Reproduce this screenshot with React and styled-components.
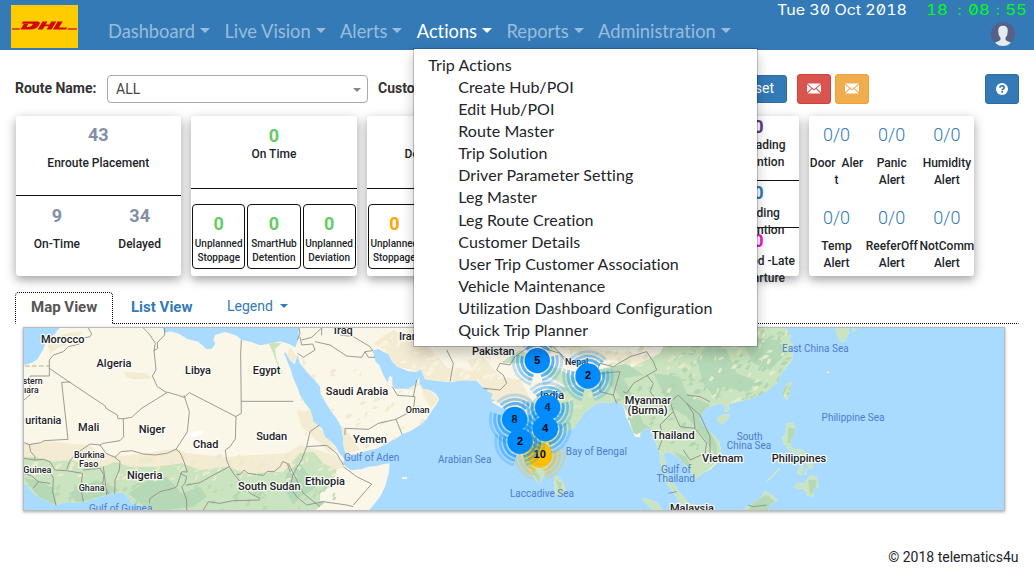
import React from "react";
import styled, { createGlobalStyle, css } from "styled-components";

const GlobalStyle = createGlobalStyle`
  * { box-sizing: border-box; }
  body { margin: 0; background: #fff; font-family: Roboto, sans-serif; color: #212529; overflow: hidden; }
`;

const Page = styled.div`
  width: 1034px;
  height: 576px;
  display: flex;
  flex-direction: column;
`;

/* ---------- header ---------- */
const Header = styled.header`
  height: 50px;
  flex: none;
  background: #337ab7;
  display: flex;
  padding-left: 11px;
`;
const Logo = styled.div`
  width: 67px;
  height: 43px;
  margin-top: 5px;
  background: #ffcc00;
`;
const Nav = styled.nav`
  display: flex;
  flex: 1;
  gap: 14.4px;
  margin-left: 30px;
  padding-top: 18px;
`;
const NavItem = styled.div`
  position: relative;
  display: flex;
  height: 27px;
  font: 18.27px/27px Lato, sans-serif;
  font-variant-ligatures: none;
  white-space: nowrap;
  color: ${(p) => (p.$active ? "#fff" : "rgba(255,255,255,.5)")};
`;
const Caret = styled.span`
  margin: ${(p) => p.$margin || "10px 0 0 5px"};
  width: 0;
  height: 0;
  border: solid transparent;
  border-width: ${(p) => p.$size || 5}px ${(p) => p.$size || 5}px 0;
  border-top-color: ${(p) => p.$color || "currentColor"};
`;
const Menu = styled.div`
  position: absolute;
  z-index: 10;
  top: 30px;
  left: -4px;
  width: 345px;
  height: 299px;
  padding: 5px 0 0 14.500px;
  background: #fff;
  border: 1px solid rgba(0, 0, 0, 0.2);
  background-clip: padding-box;
  box-shadow: 0 6px 12px rgba(0, 0, 0, 0.22);
  color: #212529;
  font: 16px/22.08px Lato, sans-serif;
  letter-spacing: 0.06px;
  font-variant-ligatures: none;
`;
const MenuTitle = styled.div``;
const MenuLink = styled.div`
  padding-left: 30px;
`;
const HeaderSide = styled.div`
  width: 257px;
  display: flex;
  flex-direction: column;
`;
const Clock = styled.div`
  display: flex;
  height: 20px;
  font: 14px/20px Inter, sans-serif;
  font-feature-settings: "zero", "tnum";
  color: #fff;
  white-space: pre;
`;
const DateText = styled.span`
  width: 149px;
  transform: scaleX(1.145);
  transform-origin: left;
`;
const TimeText = styled.span`
  display: flex;
  width: 102px;
  color: #00ff18;
  transform: scaleX(1.2);
  transform-origin: left;
`;
const TimePart = styled.span`
  width: ${(p) => p.$w}px;
`;
const Avatar = styled.svg`
  width: 24px;
  height: 24px;
  margin: 2px 0 0 214px;
`;

/* ---------- filter row ---------- */
const Filters = styled.div`
  display: flex;
  align-items: center;
  height: 29px;
  margin: 24px 15px 0;
  flex: none;
  font-size: 14px;
`;
const FieldLabel = styled.label`
  width: ${(p) => p.$w}px;
  padding-bottom: 2px;
  font-weight: 700;
  color: #333;
  white-space: nowrap;
`;
const Select = styled.div`
  width: 261px;
  height: 28px;
  display: flex;
  justify-content: space-between;
  margin-right: 10px;
  padding: 0 6px 0 8px;
  border: 1px solid #aaa;
  border-radius: 4px;
  color: #444;
  line-height: 27px;
`;
const Button = styled.button`
  width: ${(p) => p.$w || 34}px;
  height: ${(p) => p.$h || 30}px;
  display: flex;
  align-items: center;
  justify-content: ${(p) => (p.$end ? "flex-end" : "center")};
  padding: ${(p) => (p.$end ? "0 12px 2px 0" : 0)};
  margin: 0 0 0 ${(p) => p.$ml || 0}px;
  background: ${(p) => p.$bg};
  border: 1px solid ${(p) => p.$edge};
  border-radius: 3px;
  color: #fff;
  font: 14px Roboto, sans-serif;
`;

/* ---------- cards ---------- */
const Cards = styled.section`
  display: flex;
  gap: 10px;
  height: 160px;
  flex: none;
  margin: 13px 0 0 15.5px;
`;
const Card = styled.div`
  width: ${(p) => p.$w || 165.6}px;
  height: 159.500px;
  background: #fff;
  border-radius: 3px;
  box-shadow: 0 4px 8px rgba(0, 0, 0, 0.24), 0 3px 14px rgba(0, 0, 0, 0.16);
  display: flex;
  flex-direction: column;
  text-align: center;
`;
const Value = styled.div`
  font-size: 18px;
  line-height: 20px;
  font-weight: ${(p) => p.$weight || 700};
  color: ${(p) => p.$color || "#8090a6"};
`;
const Caption = styled.div`
  font-size: ${(p) => (p.$small ? 10 : 12)}px;
  line-height: ${(p) => (p.$small ? 14 : 17)}px;
  font-weight: 500;
  white-space: pre;
`;
const Block = styled.div`
  height: ${(p) => p.$h}px;
  flex: none;
  padding-top: ${(p) => p.$top}px;
  ${(p) => p.$line && css`border-bottom: 1px solid #111;`}
  ${Caption} { margin-top: ${(p) => p.$gap || 0}px; }
`;
const Columns = styled.div`
  display: grid;
  grid-template-columns: repeat(${(p) => p.$n}, 1fr);
`;
const Tiles = styled.div`
  display: flex;
  gap: 2px;
  margin: 15px 1px 0;
`;
const Tile = styled.div`
  flex: 1;
  min-width: 0;
  height: 65px;
  padding-top: 9px;
  border: 1px solid #111;
  border-radius: 4px;
  display: flex;
  flex-direction: column;
  align-items: center;
  ${Caption} { margin-top: 3px; }
`;

/* ---------- tabs and map ---------- */
const Tabs = styled.div`
  display: flex;
  height: 32px;
  flex: none;
  margin: 16px 15px 0;
  font-size: 15px;
  line-height: 29px;
`;
const Tab = styled.div`
  width: ${(p) => p.$w}px;
  padding-left: ${(p) => p.$pad}px;
  display: flex;
  white-space: nowrap;
  font-weight: ${(p) => (p.$light ? 400 : 700)};
  font-size: ${(p) => (p.$light ? 14 : 15)}px;
  line-height: ${(p) => (p.$light ? 27 : 29)}px;
  color: ${(p) => (p.$active ? "#555" : "#337ab7")};
  border: 1px dotted transparent;
  border-bottom-color: ${(p) => (p.$active ? "transparent" : "#000")};
  ${(p) => p.$active && css`
    border-color: #000 #000 transparent;
    border-radius: 4px 4px 0 0;
  `}
  ${(p) => p.$fill && css`flex: 1;`}
`;
const MapFrame = styled.div`
  width: 982px;
  height: 184px;
  flex: none;
  margin: 3px 0 0 23px;
  border: 1px solid #bbb;
  box-shadow: 0 1px 3px rgba(0, 0, 0, 0.35);
`;
const MapSvg = styled.svg`
  display: block;
  width: 980px;
  height: 182px;
`;
const Footer = styled.footer`
  margin: 36px 15.5px 0 0;
  text-align: right;
  font-size: 14px;
  line-height: 20px;
`;

const MENU = [
  "Create Hub/POI", "Edit Hub/POI", "Route Master", "Trip Solution",
  "Driver Parameter Setting", "Leg Master", "Leg Route Creation",
  "Customer Details", "User Trip Customer Association", "Vehicle Maintenance",
  "Utilization Dashboard Configuration", "Quick Trip Planner",
];
const NAV = ["Dashboard", "Live Vision", "Alerts", "Actions", "Reports", "Administration"];

const LAND = [
  "M178,24 162,44 140,58 130,88 112,118 96,128 72,135 V488 L88,506 102,522 130,538 150,548 168,556 185,550 205,545 225,549 250,545 270,541 290,534 325,523 350,519 372,518 385,534 396,550 420,558 442,558 446,575 H1103 L1120,556 1142,528 1156,498 1166,462 1169,430 1150,432 1130,438 1105,440 1085,447 1055,451 1040,442 1028,432 1033,416 1020,402 1006,378 990,362 975,350 966,325 940,305 932,270 915,250 900,225 893,204 880,175 872,148 852,100 856,97 872,124 884,133 893,104 899,129 920,155 942,178 960,200 962,222 975,245 992,272 1010,296 1024,322 1029,350 1031,380 1038,405 1075,402 1100,392 1130,386 1160,370 1190,355 1206,343 1230,334 1262,314 1280,298 1290,280 1310,252 1318,238 1306,220 1290,210 1268,206 1258,190 1259,170 1244,196 1225,206 1185,206 1177,194 1177,172 1168,167 1163,188 1150,165 1138,135 1127,125 1118,92 1135,86 1150,96 1165,102 1175,122 1192,140 1225,154 1250,156 1262,148 1270,166 1275,178 1305,182 1350,187 1390,181 1430,182 1446,200 1465,206 1462,213 1480,222 1472,236 1486,240 1475,246 1500,262 1520,268 1530,262 1534,290 1538,320 1546,356 1556,390 1575,425 1595,458 1608,482 1619,490 1632,466 1638,450 1643,426 1652,388 1675,360 1700,335 1725,320 1738,300 1755,275 1780,258 1800,246 1820,250 1838,246 1862,248 1872,265 1878,292 1890,316 1905,350 1920,352 1925,334 1943,320 1956,340 1968,370 1978,398 1982,430 1990,462 2000,490 2022,520 2040,548 2056,575 H2110 L2095,560 2063,548 2052,530 2036,516 2022,492 2003,480 1998,450 1996,425 1990,400 2002,396 2025,405 2040,416 2052,432 2072,452 2084,480 2100,464 2132,448 2155,425 2164,398 2158,366 2138,342 2118,324 2104,308 2100,292 2114,268 2140,256 2168,250 2175,262 2174,277 2186,272 2186,253 2210,246 2245,238 2280,226 2302,212 2330,190 2345,160 2362,138 2376,122 2378,98 2366,92 2379,76 2365,62 2374,50 2356,24 H896 L896,54 886,82 868,72 840,64 815,70 780,76 755,66 725,60 708,46 675,36 645,45 640,60 646,72 635,86 620,88 595,65 562,57 538,42 512,34 494,38 488,24Z",
  "M1665,465 1678,472 1693,495 1697,512 1680,527 1668,522 1662,500Z",
  "M2152,294 2168,284 2190,282 2183,298 2168,313 2154,306Z",
  "M2375,186 2370,215 2360,243 2350,226 2348,212 2362,190Z",
  "M2358,312 2372,308 2382,312 2386,338 2374,360 2370,376 2384,390 2404,388 2424,406 2414,408 2388,400 2366,390 2354,374 2346,352 2357,345Z",
  "M2416,426 2436,420 2440,440 2428,448ZM2398,440 2412,438 2404,466 2390,462ZM2415,450 2422,445 2420,462 2412,466ZM2382,418 2396,424 2388,434Z",
  "M2382,500 2394,488 2412,492 2430,466 2450,472 2456,502 2440,508 2440,530 2420,525 2410,504 2394,508Z",
  "M2336,444 2340,448 2310,478 2298,484 2318,466Z",
  "M2232,570 2258,548 2278,540 2294,514 2308,518 2332,540 2308,556 2304,575Z",
  "M1924,534 1950,538 1975,552 1990,575 1962,575 1942,554Z",
  "M2508,24 2546,24 2546,40 2536,62 2524,66 2512,46ZM2556,24 2572,24 2560,36Z",
  "M1205,472 1220,470 1222,476 1208,478ZM2478,158 2488,152 2486,160Z",
];

const TAN = [
  "M72,372 150,364 215,372 270,375 300,400 370,408 450,398 530,385 560,400 680,412 760,405 860,400 900,375 960,392 1010,408 1040,436 1010,450 900,455 740,470 560,470 380,450 300,450 180,440 72,420Z",
  "M140,62 200,40 250,34 225,62 175,84 150,100Z",
  "M370,155 440,160 455,175 400,178 380,172Z",
  "M905,190 925,225 985,300 1012,345 1030,400 1080,390 1060,360 1040,330 1015,310 980,280 950,240Z",
  "M1260,180 1315,238 1295,265 1270,230Z",
  "M1180,30 1220,50 1290,85 1340,140 1430,150 1430,184 1290,182 1240,150 1190,140 1160,95 1120,70Z",
  "M1400,120 1450,110 1500,170 1560,180 1600,250 1570,290 1530,270 1480,240 1440,190Z",
  "M1640,60 1700,70 1800,90 1960,110 1950,140 1860,125 1760,110 1680,80Z",
  "M870,80 890,110 880,130 860,105ZM905,110 920,130 910,140Z",
  "M890,270 930,275 968,335 1010,390 990,400 940,350 905,320Z",
];
const GREEN = [
  "M72,410 110,412 155,425 215,420 240,430 310,440 345,425 390,440 470,440 545,430 600,450 680,440 740,460 850,455 900,400 940,395 970,430 1010,450 1000,480 990,500 960,520 960,560 940,575 H72Z",
  "M1530,290 1580,285 1600,240 1650,200 1760,200 1880,150 1980,100 2000,60 2060,24 H2400 V280 L2170,280 2180,400 2080,490 2120,575 2030,575 1980,440 1870,260 1760,280 1640,420 1640,500 1590,480Z",
  "M1500,130 1560,90 1640,130 1740,180 1700,200 1580,130Z",
  "M1655,455H1705V535H1655ZM2140,275H2200V320H2140ZM2340,180H2380V250H2340ZM2340,300H2460V540H2290ZM2230,500H2340V575H2230ZM1915,525H2000V575H1915ZM2500,24H2580V70H2500Z",
  "M805,68 845,68 825,88 830,120 850,165 838,150 820,100Z",
];
const DEEP = [
  "M72,475 110,480 160,505 170,555 120,535Z", "M205,520 290,480 360,510 320,525 230,548Z",
  "M445,480 500,470 545,520 600,500 620,530 580,560 460,575 420,550 385,520Z",
  "M860,460 900,430 930,470 960,480 940,510 900,530 880,555 850,500Z",
  "M1540,300 1556,300 1570,400 1620,470 1618,490 1580,430Z",
  "M1790,150 1880,130 1930,165 1870,175 1900,230 1930,310 1960,330 1900,340 1870,240Z",
  "M1960,160 2040,170 2060,220 2130,255 2110,300 2150,370 2150,410 2110,350 2060,290 2010,260Z",
  "M2130,60 2180,90 2210,160 2290,190 2240,215 2170,200 2150,240 2110,190 2090,120Z",
  "M2220,50 2330,60 2360,100 2310,150 2260,130Z",
  "M2020,395 2060,410 2075,450 2050,430Z", "M2364,325H2385V370H2364Z", "M2425,480 2450,480 2445,520 2430,520Z",
  "M2265,540 2300,525 2325,545 2300,575H2240Z", "M1668,480 1685,490 1680,515Z",
];

const BORDERS = [
  "M265,24 275,42 270,50 248,55 238,72 205,80 190,95 160,105 148,120 V168 H90 V225 L72,240",
  "M148,145 208,186 316,258 318,265 352,285 354,296 370,296 395,292 425,265 500,218 472,200 457,168 468,150 462,90 466,70 448,42 430,24",
  "M212,186 185,187 204,358 132,362 122,368 88,374 72,368",
  "M494,24 494,45 472,68 473,85 461,92",
  "M500,216 535,226 552,232 568,218 708,290 706,357 690,380 676,390 680,420 688,440 700,460 750,520 780,535",
  "M724,60 722,100 724,280 706,290 M724,244 880,244 M710,464 L722,462 732,450 745,460 770,464 790,466 802,454 822,455 840,440 848,425 862,430 870,455",
  "M552,226 568,275 562,335 528,388 540,398 550,420 562,456 545,455 530,500 520,505 500,510 480,515 450,535 448,550",
  "M370,296 371,350 360,362 310,370 300,375 270,372 230,400 210,422 200,448 M88,374 92,395 105,410 104,420 72,415 M104,420 130,418 150,425 165,450 200,452 248,460 242,500 250,545",
  "M300,375 318,400 345,412 360,425 358,450 345,480 344,522 M310,440 315,480 320,525 M345,412 362,395 395,392 430,402 465,405 500,400 528,388",
  "M150,455 160,475 158,515 168,556 M72,460 95,468 115,485 100,505 M115,485 150,490 M250,450 300,445 312,465 308,490 326,522",
  "M540,460 560,470 555,490 545,500 560,540 560,570 M560,495 600,488 640,465 688,440 M610,570 625,545 660,550 700,542 780,540",
  "M897,24 900,40 892,60 M905,60 935,52 965,24 M900,50 905,75 938,72 945,90 910,112 893,100 M945,65 990,75 1040,108 1085,112 1095,95 1118,92 M965,24 965,46 M1095,95 1105,112 1125,112",
  "M1035,345 1035,325 1105,328 1135,310 1188,298 1240,270 1245,230 1222,228 1192,226 1177,200 M1188,298 1206,343 M1240,230 1250,180",
  "M1000,24 1020,45 1060,50 1110,80 1118,92 M1340,90 1360,130 1350,185",
  "M958,315 930,335 920,380 905,420 880,460 910,520 960,560 M920,380 980,376 1010,400 1030,435 M1030,440 1070,470 1115,492 1060,555",
  "M865,430 880,460 M880,460 870,500 890,530 920,555 970,545 1040,555 1060,560",
  "M1450,205 1500,210 1520,190 1510,165 1490,150 1500,130 1530,135 1545,110 1580,85 1600,60 M1600,60 1630,85 1680,100 1700,130 1790,155 1800,130 1840,140 1890,110 1940,95 1960,125 1970,150 1935,170 1900,190 1880,220 1870,215",
  "M1660,80 1690,110 1740,130 1790,140 M1800,160 1860,155 1850,190 1840,225 1800,215 1800,160 M1840,225 1850,250",
  "M1940,165 1960,190 1950,215 1985,260 2010,245 2020,275 1980,315 1990,350 1975,390 M2010,245 2035,225 2060,250 2080,280 2085,325 2040,320 2020,275 M2060,225 2100,230 2130,245 M2085,325 2120,370 2115,400 2070,420 2050,390 M2060,250 2100,285 2130,350 2130,400",
  "M2005,520 2030,515 M2245,555 2260,560 2300,555",
];

/* deterministic scatter for the relief of the terrain */
const scatter = (seed, count, x0, x1, y0, y1) => {
  let s = seed;
  const next = () => {
    s = (s * 16807) % 2147483647;
    return s / 2147483647;
  };
  return Array.from({ length: count }, () => {
    const x = x0 + next() * (x1 - x0);
    const y = y0 + next() * (y1 - y0);
    const w = 5 + next() * 16;
    const h = 3 + next() * 9;
    return `M${x},${y}l${w * 0.5},${-h} ${w * 0.6},${h * 0.4} ${-w * 0.3},${h * 0.7} ${-w * 0.4},${h * 0.5} ${-w * 0.5},${-h * 0.1}z`;
  }).join("");
};
const RELIEF = [
  [scatter(7, 120, 1990, 2380, 30, 250), "#b2d6b4"],
  [scatter(19, 60, 2000, 2380, 30, 260), "#e3ebc8"],
  [scatter(31, 60, 1780, 2130, 130, 400), "#b2d6b4"],
  [scatter(43, 60, 1560, 1800, 150, 380), "#dce8c4"],
  [scatter(5, 90, 80, 1000, 490, 570), "#b8dab2"],
  [scatter(11, 80, 80, 1000, 410, 480), "#ece9cc"],
  [scatter(23, 90, 1130, 1500, 30, 180), "#f9f3e2"],
  [scatter(3, 40, 900, 1260, 140, 390), "#f3ead1"],
  [scatter(57, 45, 1640, 2020, 70, 140), "#e0e8c6"],
];

const PLACES = [
  ["Morocco", 188, 69, 33], ["Algeria", 342, 140, 33], ["Libya", 594, 161, 33], ["Egypt", 800, 161, 33],
  ["stern", 98, 193, 26], ["ıara", 94, 219, 26], ["uritania", 130, 311, 32], ["Mali", 266, 332, 33],
  ["Niger", 456, 338, 33], ["Chad", 617, 383, 33], ["Burkina", 268, 414, 27], ["Faso", 266, 441, 27],
  ["Guinea", 112, 460, 27], ["Nigeria", 434, 476, 33], ["Ghana", 275, 513, 27], ["Sudan", 815, 359, 33],
  ["South Sudan", 808, 511, 33], ["Ethiopia", 975, 495, 33], ["Saudi Arabia", 1071, 226, 33],
  ["Yemen", 1110, 368, 33], ["Oman", 1253, 279, 27], ["Iraq", 1030, 43, 33], ["Iran", 1225, 61, 33],
  ["Pakistan", 1480, 104, 33], ["Nepal", 1730, 134, 27], ["India", 1656, 237, 33],
  ["Myanmar", 1944, 251, 33], ["(Burma)", 1943, 281, 33], ["Thailand", 2020, 356, 33],
  ["Vietnam", 2168, 425, 33], ["Philippines", 2397, 425, 33], ["Malaysia", 2076, 575, 33],
];
const SEAS = [
  ["Gulf of Guinea", 362, 575], ["Gulf of Aden", 1115, 424], ["Arabian Sea", 1394, 430],
  ["Bay of Bengal", 1789, 405], ["Laccadive Sea", 1626, 532], ["Gulf of", 2028, 459], ["Thailand", 2027, 486],
  ["South", 2249, 359], ["China Sea", 2247, 388], ["East China Sea", 2446, 95], ["Philippine Sea", 2559, 302],
];
const CLUSTERS = [
  [10, 1619, 405, "#ffbf00"], [5, 1612, 122, "#008cff"], [2, 1764, 168, "#008cff"], [8, 1544, 298, "#008cff"],
  [4, 1643, 262, "#008cff"], [4, 1636, 326, "#008cff"], [2, 1560, 364, "#008cff"],
];

const Cluster = ({ n, x, y, color }) => (
  <g transform={`translate(${x} ${y})`}>
    {[[47, 0.62], [60, 0.42], [73, 0.22]].map(([r, o]) => (
      <circle key={r} r={r} fill="none" stroke={color} strokeWidth="8.5" strokeOpacity={o}
        pathLength="360" strokeDasharray="92 28" transform="rotate(-16)" />
    ))}
    <circle r="38" fill={color} />
    <text y="10" textAnchor="middle" fontFamily="Liberation Sans, Arial, sans-serif" fontWeight="700" fontSize="33" fill="#000">{n}</text>
  </g>
);

const WorldMap = () => (
  <MapSvg viewBox="72 24 2940 546" preserveAspectRatio="none">
    <defs>
      <clipPath id="land"><path d={LAND.join("")} /></clipPath>
    </defs>
    <rect x="72" y="24" width="2940" height="546" fill="#a9daff" />
    <path d={LAND.join("")} fill="#faf6e8" />
    <g clipPath="url(#land)">
      {TAN.map((d) => <path key={d} d={d} fill="#f3ebd2" />)}
      {GREEN.map((d) => <path key={d} d={d} fill="#c9e4be" />)}
      {DEEP.map((d) => <path key={d} d={d} fill="#b5d9b6" />)}
      {RELIEF.map(([d, fill]) => <path key={d} d={d} fill={fill} />)}
      <path d="M558,350 580,335 608,332 610,342 580,352Z" fill="#fff" />
    </g>
    <path d="M75,138H148" stroke="#ccc8bb" strokeWidth="4" strokeDasharray="14 7" />
    <g fill="none" stroke="#8d8c88" strokeWidth="2.6" strokeLinejoin="round">
      {BORDERS.map((d) => <path key={d} d={d} />)}
    </g>
    <g textAnchor="middle" fontFamily="Roboto, sans-serif" fontSize="30" fill="#4f7cc9">
      {SEAS.map(([t, x, y]) => <text key={t + x} x={x} y={y}>{t}</text>)}
    </g>
    <g textAnchor="middle" fontFamily="Roboto, sans-serif" fontWeight="500" fill="#222"
      stroke="#fff" strokeOpacity=".85" strokeWidth="8" strokeLinejoin="round" paintOrder="stroke">
      {PLACES.map(([t, x, y, s]) => <text key={t + x} x={x} y={y} fontSize={s}>{t}</text>)}
    </g>
    {CLUSTERS.map(([n, x, y, c]) => <Cluster key={`${x}-${y}`} n={n} x={x} y={y} color={c} />)}
  </MapSvg>
);

const DhlLogo = () => (
  <svg width="67" height="43" viewBox="0 0 67 43">
    <g transform="translate(0 2.500) scale(1 .86)">
      <g fill="#e8501c">
        <path d="M1,23.800H9.500L8.300,26.200H1Z" />
        <path d="M57,23.800H66V26.200H56Z" />
      </g>
      <g fill="#d40511">
        <path d="M12,16.300H26.500Q30,16.700 28.200,20.200Q25.500,25.600 20.500,25.600H9.500L12.800,19.300H17.300L15.600,22.700H17.500Q20.600,22.300 21.700,19.700L21.500,19H10.800Z" />
        <path d="M31.500,16.300H36.500L34.600,19.900H38.500L40.400,16.300H45.300L40.500,25.600H35.600L37.700,21.700H33.700L31.600,25.600H26.700Z" />
        <path d="M46.700,16.300H51.700L48,23.200H56.200L55,25.600H41.900Z" />
      </g>
    </g>
  </svg>
);

const Envelope = () => (
  <svg width="14" height="11" viewBox="0 0 14 11" fill="#fff">
    <path d="M.3,.5H13.700L7,6.300ZM0,1.600 4.300,5.300 0,9.300ZM14,1.600 9.700,5.300 14,9.300ZM5,5.900 7,7.600 9,5.900 13.500,10.400H.5Z" />
  </svg>
);
const Help = () => (
  <svg width="12" height="12" viewBox="0 0 12 12">
    <circle cx="6" cy="6" r="6" fill="#fff" />
    <path d="M3.900,4.700Q4,2.900 6.100,2.900T8.200,4.600Q8.200,5.500 7.200,6T6.200,7.200" fill="none" stroke="#337ab7" strokeWidth="1.700" />
    <path d="M5.300,8H7.100V9.700H5.300Z" fill="#337ab7" />
  </svg>
);

const StatusCard = ({ title, color, tiles }) => (
  <Card>
    <Block $h={73} $top={10} $line>
      <Value $color={color}>0</Value>
      <Caption>{title}</Caption>
    </Block>
    <Tiles>
      {tiles.map((t) => (
        <Tile key={t}>
          <Value $color={color}>0</Value>
          <Caption $small>{t}</Caption>
        </Tile>
      ))}
    </Tiles>
  </Card>
);
const TILES = ["Unplanned\nStoppage", "SmartHub\nDetention", "Unplanned\nDeviation"];
const ALERTS = ["Door  Aler\nt", "Panic\nAlert", "Humidity\nAlert", "Temp\nAlert", "ReeferOff\nAlert", "NotComm\nAlert"];

export default function App() {
  return (
    <Page>
      <GlobalStyle />
      <Header>
        <Logo><DhlLogo /></Logo>
        <Nav>
          {NAV.map((n) => (
            <NavItem key={n} $active={n === "Actions"}>
              {n}
              <Caret />
              {n === "Actions" && (
                <Menu>
                  <MenuTitle>Trip Actions</MenuTitle>
                  {MENU.map((m) => <MenuLink key={m}>{m}</MenuLink>)}
                </Menu>
              )}
            </NavItem>
          ))}
        </Nav>
        <HeaderSide>
          <Clock>
            <DateText>Tue 30 Oct 2018</DateText>
            <TimeText>
              <TimePart $w={26}>18</TimePart>
              <TimePart $w={9}>:</TimePart>
              <TimePart $w={23}>08</TimePart>
              <TimePart $w={8}>:</TimePart>
              <TimePart $w={20}>55</TimePart>
            </TimeText>
          </Clock>
          <Avatar viewBox="0 0 24 24">
            <circle cx="12" cy="12" r="12" fill="#56618a" />
            <path d="M7.200,8.500Q7.300,3.700 12,3.700T16.800,8.500Q16.900,13.200 14.500,15.700V17.600Q15,19.300 20,20.500Q17,24 12,24T4,20.500Q9,19.300 9.500,17.600V15.700Q7.100,13.200 7.200,8.500Z" fill="#e6ebee" />
          </Avatar>
        </HeaderSide>
      </Header>

      <Filters>
        <FieldLabel $w={92}>Route Name:</FieldLabel>
        <Select>ALL<Caret $margin="12px 0 0" $color="#888" $size={4.5} /></Select>
        <FieldLabel $w={354}>Customer Name:</FieldLabel>
        <Button $end $w={55} $h={28} $bg="#337ab7" $edge="#2e6da4">Reset</Button>
        <Button $ml={10} $bg="#d9534f" $edge="#d43f3a"><Envelope /></Button>
        <Button $ml={4} $bg="#f0ad4e" $edge="#eea236"><Envelope /></Button>
        <Button $ml={116} $bg="#337ab7" $edge="#2e6da4"><Help /></Button>
      </Filters>

      <Cards>
        <Card>
          <Block $h={80} $top={9} $gap={10} $line>
            <Value>43</Value>
            <Caption>Enroute Placement</Caption>
          </Block>
          <Columns $n={2}>
            <Block $h={79} $top={10} $gap={10}><Value>9</Value><Caption>On-Time</Caption></Block>
            <Block $h={79} $top={10} $gap={10}><Value>34</Value><Caption>Delayed</Caption></Block>
          </Columns>
        </Card>
        <StatusCard title="On Time" color="#66cb66" tiles={TILES} />
        <StatusCard title="Delayed ( < 1 hr )" color="#ffa500" tiles={TILES} />
        <StatusCard title="Delayed ( > 1 hr )" color="#e53935" tiles={TILES} />
        <Card $w={81}>
          <Block $h={65} $top={1} $line>
            <Value $color="#5b3a8c">0</Value>
            <Caption>{"Unloading\nDetention"}</Caption>
          </Block>
          <Block $h={47} $top={2} $gap={2} $line>
            <Value $color="#337ab7">0</Value>
            <Caption>{"Loading\nDetention"}</Caption>
          </Block>
          <Block $h={47} $top={3} $gap={2}>
            <Value $color="#f312c8">0</Value>
            <Caption>{"Delayed -Late\nDeparture"}</Caption>
          </Block>
        </Card>
        <Card>
          <Columns $n={3}>
            {ALERTS.map((a) => (
              <Block key={a} $h={83} $top={9} $gap={10}>
                <Value $weight={300} $color="#337ab7">0/0</Value>
                <Caption>{a}</Caption>
              </Block>
            ))}
          </Columns>
        </Card>
      </Cards>

      <Tabs>
        <Tab $active $w={98} $pad={15}>Map View</Tab>
        <Tab $w={96} $pad={17}>List View</Tab>
        <Tab $light $fill $pad={17}>Legend<Caret $margin="11px 0 0 7px" $size={4} /></Tab>
      </Tabs>
      <MapFrame><WorldMap /></MapFrame>
      <Footer>© 2018 telematics4u</Footer>
    </Page>
  );
}
